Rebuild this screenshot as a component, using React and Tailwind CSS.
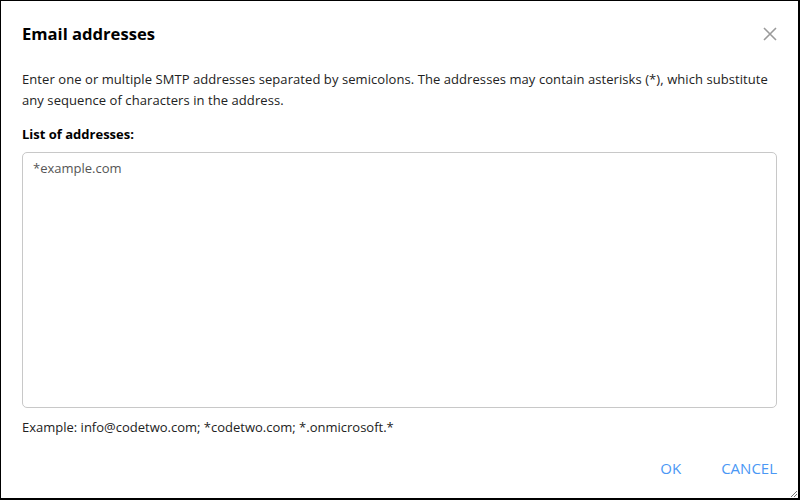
import React from "react";

export default function App() {
  return (
    <div
      className="w-[800px] h-[500px] bg-white border-black border-t border-l border-r-2 border-b-2 flex flex-col relative text-[#1a1a1a]"
      style={{ fontFamily: '"Open Sans", "Noto Sans", sans-serif' }}
    >
      <div className="flex items-center justify-between pl-[21px] pr-[21px] pt-[20px] h-[46px]">
        <h1 className="text-[16.6px] font-bold text-black leading-none">Email addresses</h1>
        <svg width="14" height="14" viewBox="0 0 14 14" className="mr-[0px] mt-[-1px]">
          <path d="M1 1 L13 13 M13 1 L1 13" stroke="#9a9a9a" strokeWidth="1.6" />
        </svg>
      </div>
      <div className="px-[21px] pt-[22px] flex flex-col flex-1">
        <p className="text-[13px] leading-[21px] text-[#222] tracking-[0.07px]">
          Enter one or multiple SMTP addresses separated by semicolons. The addresses may contain asterisks (*), which substitute any sequence of characters in the address.
        </p>
        <div className="mt-[14px] text-[13px] font-bold text-black leading-[18px]">List of addresses:</div>
        <div className="mt-[9px] h-[256px] border border-[#c8c8c8] rounded-[5px] px-[10px] py-[6px] text-[13px] text-[#555]">
          *example.com
        </div>
        <div className="mt-[10px] text-[13px] text-[#222] leading-[18px]">
          Example: info@codetwo.com; *codetwo.com; *.onmicrosoft.*
        </div>
        <div className="flex justify-end gap-[40px] mt-[21px] text-[15px] text-[#4a98f5]">
          <span>OK</span>
          <span>CANCEL</span>
        </div>
      </div>
      <svg width="10" height="10" viewBox="0 0 10 10" className="absolute right-0 bottom-0">
        <path d="M9 3 L3 9 M9 6 L6 9" stroke="#777" strokeWidth="1" />
      </svg>
    </div>
  );
}
